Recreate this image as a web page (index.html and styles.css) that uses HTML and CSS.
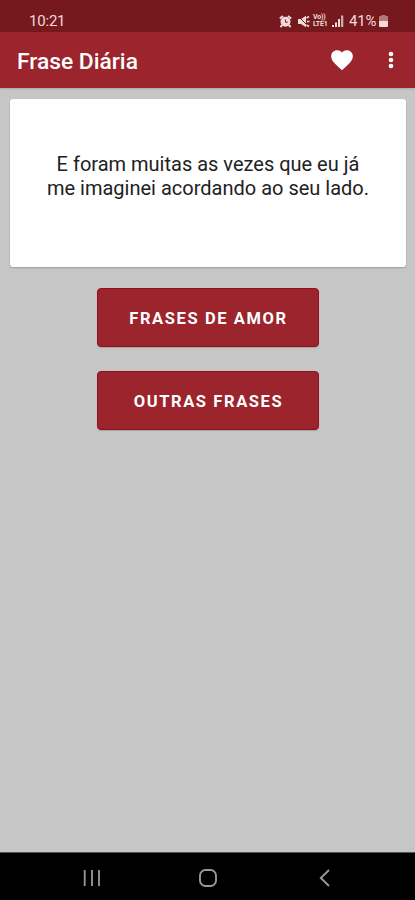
FILE: index.html
```html
<!DOCTYPE html>
<html lang="pt-BR">
<head>
<meta charset="utf-8">
<title>Frase Diária</title>
<link rel="stylesheet" href="styles.css">
</head>
<body>
<div class="app">
  <div class="status">
    <span class="time">10:21</span>
    <div class="indicators">
      <svg class="alarm" width="13" height="13" viewBox="0 0 13 13"><circle cx="6.5" cy="6.700" r="5" fill="currentColor"/><path d="M.8 3.5L4 1M12.200 3.5L9 1M3 10L1.5 12.3M10 10l1.5 2.300" stroke="currentColor" stroke-width="2"/><path d="M6.5 4.500V7.200H8.700" stroke="#75191f" stroke-width="1" fill="none"/></svg>
      <svg class="mute" width="13" height="13" viewBox="0 0 13 13"><path d="M1 4h3L9 .8v11.400L4 9H1z" fill="currentColor"/><path d="M1 1l11 11" stroke="#75191f" stroke-width="1"/><path d="M9.500 3l2.500-1.500M10 6.500h2.500M9.500 10l2.500 1.500" stroke="currentColor" stroke-width="1.500"/></svg>
      <span class="volte"><span>Vo))</span><span>LTE1</span></span>
      <svg class="signal" width="12" height="12" viewBox="0 0 12 12"><path d="M0 10h2v2H0zM3 7.500h2V12H3zM6 4h2v8H6z" fill="currentColor"/><path d="M9 .5h2.300V12H9z" fill="currentColor" opacity=".75"/></svg>
      <span class="percent">41%</span>
      <svg class="battery" width="9" height="12" viewBox="0 0 9 12"><path d="M2.500 0h4v1H8q1 0 1 1v4H0V2q0-1 1-1h1.500z" fill="currentColor" opacity=".5"/><path d="M0 6h9v5q0 1-1 1H1q-1 0-1-1z" fill="currentColor"/></svg>
    </div>
  </div>
  <header class="bar">
    <h1>Frase Diária</h1>
    <svg class="heart" width="26" height="26" viewBox="0 0 24 24"><path fill="currentColor" d="M12 21.350l-1.450-1.320C5.400 15.360 2 12.280 2 8.500 2 5.420 4.420 3 7.500 3c1.740 0 3.410.81 4.500 2.090C13.090 3.810 14.760 3 16.500 3 19.580 3 22 5.420 22 8.500c0 3.780-3.400 6.860-8.550 11.540L12 21.350z"/></svg>
    <svg class="more" width="6" height="18" viewBox="0 0 6 18"><g fill="currentColor"><circle cx="3" cy="3" r="2.300"/><circle cx="3" cy="9" r="2.300"/><circle cx="3" cy="15" r="2.300"/></g></svg>
  </header>
  <main>
    <section class="card"><p>E foram muitas as vezes que eu já<br>me imaginei acordando ao seu lado.</p></section>
    <button class="btn">FRASES DE AMOR</button>
    <button class="btn">OUTRAS FRASES</button>
  </main>
  <nav>
    <svg width="18" height="18" viewBox="0 0 18 18"><path d="M1.700 1v16M9 1v16M16 1v16" stroke="currentColor" stroke-width="1.800"/></svg>
    <svg width="18" height="18" viewBox="0 0 18 18"><rect x="1" y="1" width="16" height="16" rx="5.500" fill="none" stroke="currentColor" stroke-width="1.900"/></svg>
    <svg width="18" height="18" viewBox="0 0 18 18"><path d="M14 1L5.800 9l8.200 8" fill="none" stroke="currentColor" stroke-width="1.900"/></svg>
  </nav>
</div>
</body>
</html>
```
FILE: styles.css
```css
* { box-sizing: border-box; }
body { margin: 0; font-family: Roboto, "Liberation Sans", sans-serif; }
.app { height: 900px; display: flex; flex-direction: column; background: #c6c6c6; }
.status {
  height: 32px; padding: 9px 27px 0 29px;
  display: flex; justify-content: space-between; align-items: flex-start;
  background: #75191f; color: #f0d9d8;
}
.time { font-size: 15px; line-height: 24px; letter-spacing: -0.2px; }
.indicators { height: 24px; display: flex; align-items: center; }
.mute { margin-left: 5px; }
.volte {
  width: 16px; margin-left: 3px; display: flex; flex-direction: column;
  font-size: 7px; line-height: 7px; font-weight: 700; letter-spacing: -0.2px;
}
.signal { margin-left: 3px; }
.percent { margin-left: 5px; width: 28px; font-size: 15px; line-height: 24px; letter-spacing: -0.2px; }
.battery { margin-left: 2px; }
.bar {
  height: 56px; padding: 0 21px 0 17px; display: flex; align-items: center;
  background: #9b242d; color: #fff;
  box-shadow: 0 1px 2px rgba(0, 0, 0, .15);
}
.bar h1 { margin: 3px auto 0 0; font-size: 22.8px; line-height: 28px; font-weight: 500; }
.heart { margin-right: 33px; }
main { flex: 1; padding: 11px 9px 0 10px; display: flex; flex-direction: column; align-items: center; }
.card {
  width: 100%; height: 168px; padding-top: 53px; margin-bottom: 21px;
  background: #fff; border-radius: 3px; box-shadow: 0 1px 2px rgba(0, 0, 0, .2);
}
.card p { margin: 0; text-align: center; font-size: 20px; line-height: 24px; color: #222; }
.btn {
  width: 222px; height: 59px; padding: 3px 0 0 1px; margin-bottom: 24px;
  border: 1px solid #930f1b; border-radius: 4px; background: #9b242d; color: #fff;
  font: 700 16.5px/20px Roboto, sans-serif; letter-spacing: 1.6px;
  box-shadow: 0 1px 1px rgba(0, 0, 0, .15);
}
nav {
  height: 48px; padding: 3px 82px 0 83px; border-top: 1px solid #555;
  display: flex; justify-content: space-between; align-items: center;
  background: #000; color: #999;
}
nav svg { margin-bottom: 1px; }
```
